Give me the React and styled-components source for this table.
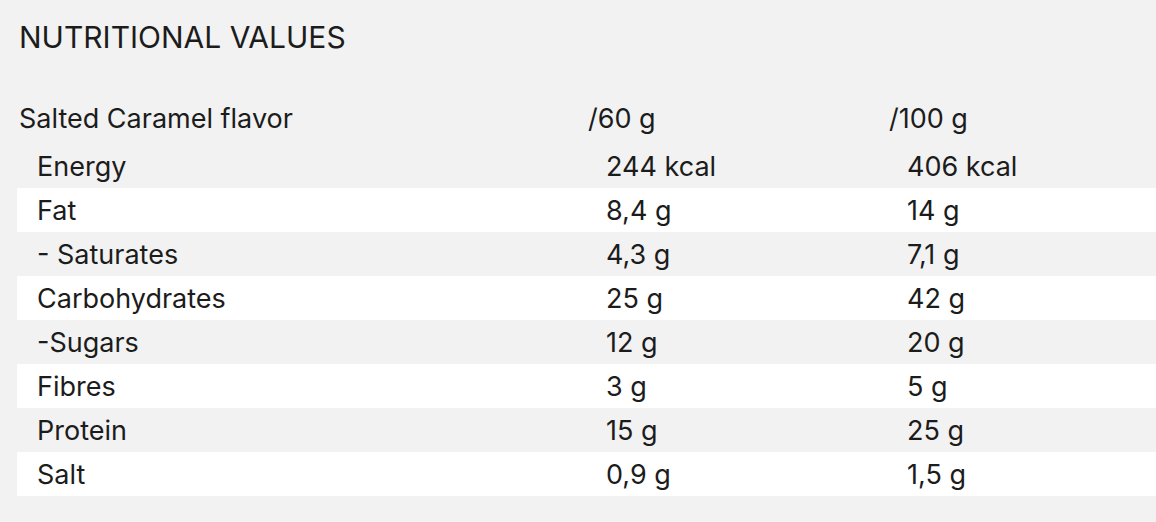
import React from "react";
import styled, { createGlobalStyle } from "styled-components";

const GlobalStyle = createGlobalStyle`
  body {
    margin: 0;
    background: #f2f2f2;
    font-family: Inter, "Open Sans", sans-serif;
    color: #1c1c1c;
  }
`;

const rows = [
  { name: "Energy", per60: "244 kcal", per100: "406 kcal" },
  { name: "Fat", per60: "8,4 g", per100: "14 g" },
  { name: "- Saturates", per60: "4,3 g", per100: "7,1 g" },
  { name: "Carbohydrates", per60: "25 g", per100: "42 g" },
  { name: "-Sugars", per60: "12 g", per100: "20 g" },
  { name: "Fibres", per60: "3 g", per100: "5 g" },
  { name: "Protein", per60: "15 g", per100: "25 g" },
  { name: "Salt", per60: "0,9 g", per100: "1,5 g" },
];

const App = () => {
  return (
    <Page>
      <GlobalStyle />
      <Title>NUTRITIONAL VALUES</Title>
      <Table>
        <HeadRow>
          <HeadCell>Salted Caramel flavor</HeadCell>
          <HeadCell>/60 g</HeadCell>
          <HeadCell>/100 g</HeadCell>
        </HeadRow>
        {rows.map((r, i) => (
          <Row key={r.name} $odd={i % 2 === 1}>
            <Cell>{r.name}</Cell>
            <Cell>{r.per60}</Cell>
            <Cell>{r.per100}</Cell>
          </Row>
        ))}
      </Table>
    </Page>
  );
};

const Page = styled.div`
  padding: 17px 0 26px 17px;
`;

const Title = styled.h2`
  margin: 0 0 36px 2px;
  font-size: 30px;
  font-weight: 400;
  line-height: 40px;
`;

const Table = styled.div`
  display: flex;
  flex-direction: column;
`;

const HeadRow = styled.div`
  display: grid;
  grid-template-columns: 569px 301px 1fr;
  height: 51px;
  padding-bottom: 1px;
  box-sizing: border-box;
  align-items: center;
`;

const Row = styled.div`
  display: grid;
  grid-template-columns: 569px 301px 1fr;
  height: 44px;
  align-items: center;
  background: ${(p) => (p.$odd ? "#ffffff" : "transparent")};
`;

const HeadCell = styled.div`
  padding-left: 2px;
  font-size: 27px;
`;

const Cell = styled.div`
  padding-left: 20px;
  font-size: 27px;
`;

export default App;
